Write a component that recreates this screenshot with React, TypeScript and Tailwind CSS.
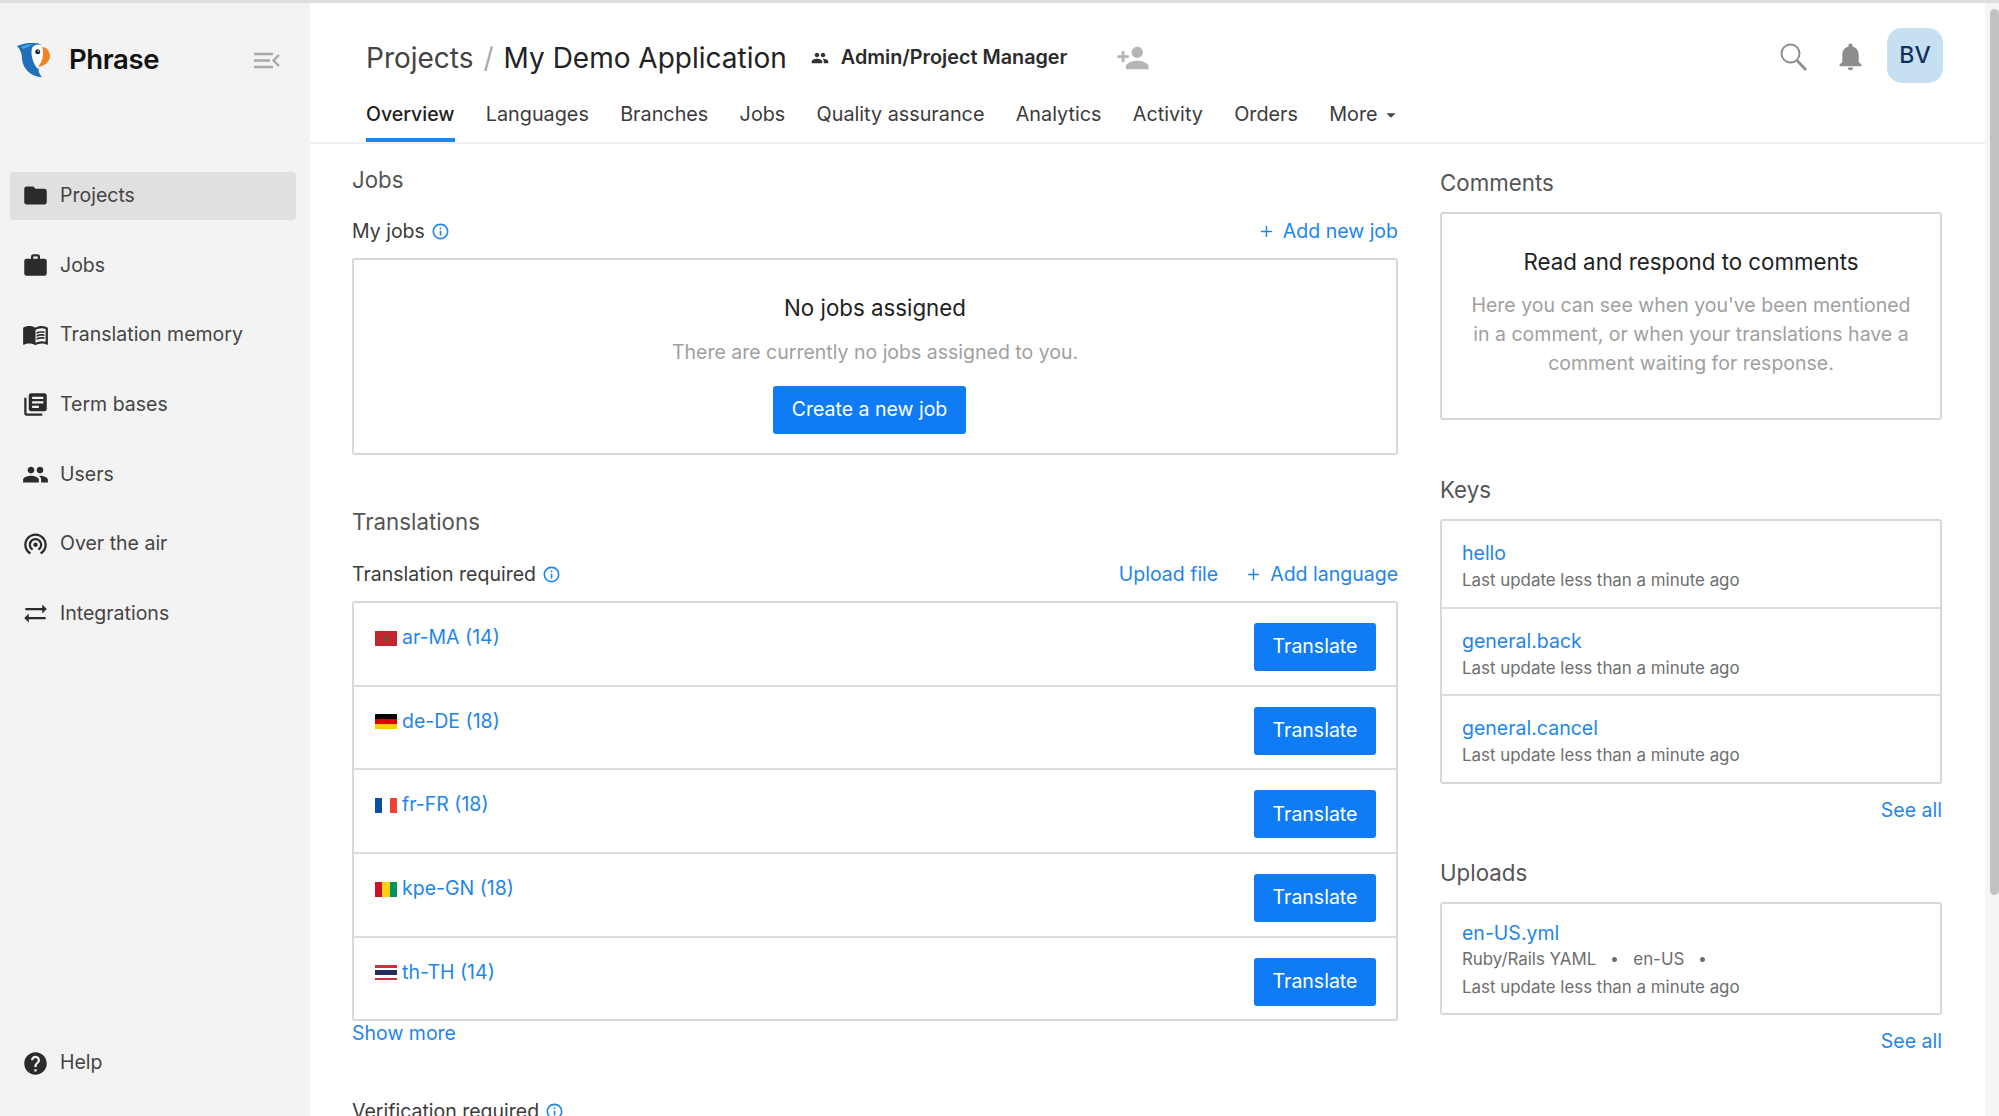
import { Plus } from "lucide-react";
import {
  MdArrowDropDown,
  MdFolder,
  MdHelp,
  MdInfoOutline,
  MdLibraryBooks,
  MdMenuBook,
  MdNotifications,
  MdPeople,
  MdPersonAdd,
  MdSyncAlt,
  MdWifiTethering,
  MdWork,
} from "react-icons/md";

const navItems = [
  { icon: MdFolder, label: "Projects", active: true },
  { icon: MdWork, label: "Jobs" },
  { icon: MdMenuBook, label: "Translation memory" },
  { icon: MdLibraryBooks, label: "Term bases" },
  { icon: MdPeople, label: "Users" },
  { icon: MdWifiTethering, label: "Over the air" },
  { icon: MdSyncAlt, label: "Integrations" },
];

const tabs = ["Overview", "Languages", "Branches", "Jobs", "Quality assurance", "Analytics", "Activity", "Orders"];

const locales = [
  { label: "ar-MA (14)", flag: "ma" },
  { label: "de-DE (18)", flag: "de" },
  { label: "fr-FR (18)", flag: "fr" },
  { label: "kpe-GN (18)", flag: "gn" },
  { label: "th-TH (14)", flag: "th" },
];

const keys = ["hello", "general.back", "general.cancel"];

const Logo = () => (
  <svg width="33" height="34" viewBox="0 0 33 34" className="shrink-0">
    <path d="M0 3 C6 1 12 -1 18 0 C22 0 25 2 26 4 L22 24 C21 28 22 31 25 34 C14 34 6 26 5 16 C5 10 3 6 0 3 Z" fill="#1f70b8" />
    <path d="M4 4 C8 2 12 1 16 1 C13 3 9 5 6 6 Z" fill="#3fa6dc" />
    <path d="M15 5 C17 1 23 0 27 4 L24 22 L21 26 C17 22 13 13 15 5 Z" fill="#fff" />
    <path d="M25 4 C30 4 33 9 33 13 C33 19 27 23 21 24 C24 20 26 16 26 12 C26 9 26 6 25 4 Z" fill="#f58220" />
    <circle cx="20.7" cy="8.7" r="2.5" fill="#1b2a3a" />
    <circle cx="21.4" cy="8" r="0.7" fill="#fff" />
  </svg>
);

const CollapseIcon = () => (
  <svg width="26" height="17" viewBox="0 0 26 17" fill="none" stroke="#a9a9a9" strokeWidth="2.4">
    <path d="M0 2 H19 M0 8.5 H16 M0 15 H19" />
    <path d="M25 3 L19.5 8.5 L25 14" />
  </svg>
);

const SearchIcon = () => (
  <svg width="27" height="28" viewBox="0 0 27 28" fill="none" stroke="#8d8d8d" className="mb-[2px] ml-auto">
    <circle cx="10.5" cy="10.5" r="9" strokeWidth="2" />
    <path d="M17 17.5 L26 27" strokeWidth="2.6" />
  </svg>
);

const Flag = ({ code }: { code: string }) => {
  if (code === "ma") {
    return (
      <svg width="22" height="15" viewBox="0 0 22 15" className="mt-[2px] shrink-0">
        <rect width="22" height="15" fill="#c1272d" />
        <path d="M11 3.5 L12.8 10.5 L7 6.2 H15 L9.2 10.5 Z" fill="#5a5a2a" />
      </svg>
    );
  }
  if (code === "de") {
    return (
      <div className="mt-[2px] flex h-[15px] w-[22px] shrink-0 flex-col">
        <div className="flex-1 bg-black" />
        <div className="flex-1 bg-[#dd0000]" />
        <div className="flex-1 bg-[#ffce00]" />
      </div>
    );
  }
  if (code === "fr") {
    return (
      <div className="mt-[2px] flex h-[15px] w-[22px] shrink-0">
        <div className="flex-1 bg-[#0b4ea2]" />
        <div className="flex-1 bg-white" />
        <div className="flex-1 bg-[#ef4135]" />
      </div>
    );
  }
  if (code === "gn") {
    return (
      <div className="mt-[2px] flex h-[15px] w-[22px] shrink-0">
        <div className="flex-1 bg-[#ce1126]" />
        <div className="flex-1 bg-[#fcd116]" />
        <div className="flex-1 bg-[#009460]" />
      </div>
    );
  }
  return (
    <div className="mt-[2px] flex h-[15px] w-[22px] shrink-0 flex-col">
      <div className="h-[2.5px] bg-[#c8313e]" />
      <div className="h-[2.5px] bg-white" />
      <div className="h-[5px] bg-[#232d5b]" />
      <div className="h-[2.5px] bg-white" />
      <div className="h-[2.5px] bg-[#c8313e]" />
    </div>
  );
};

const SectionTitle = ({ children, className }: { children: string; className: string }) => (
  <h2 className={`text-[22.3px] leading-[30px] text-[#555] ${className}`}>{children}</h2>
);

const InfoLabel = ({ children }: { children: string }) => (
  <div className="flex items-center gap-[6px] text-[19.5px] leading-[28px] text-[#3b3b3b]">
    {children}
    <MdInfoOutline size={19} className="text-[#1e86ea]" />
  </div>
);

const Sidebar = () => (
  <aside className="flex h-full w-[310px] shrink-0 flex-col bg-[#f3f3f3]">
    <div className="flex h-[114px] items-center pr-[30px] pl-[17px]">
      <Logo />
      <span className="ml-[19px] flex-1 text-[27.5px] font-semibold tracking-[-0.4px] text-[#111]">Phrase</span>
      <CollapseIcon />
    </div>
    <nav className="mt-[54.5px] flex flex-col gap-[21.7px] pr-[14px] pl-[10px]">
      {navItems.map((item) => (
        <div
          key={item.label}
          className={`flex h-[48px] items-center gap-[11px] rounded-[4px] px-[12px] text-[19.5px] text-[#444] ${item.active ? "bg-[#e0e0e0]" : ""}`}
        >
          <item.icon size={27} className="shrink-0 text-[#2b2b2b]" />
          {item.label}
        </div>
      ))}
    </nav>
    <div className="mt-auto mb-[29px] flex h-[48px] items-center gap-[11px] px-[22px] text-[19.5px] text-[#444]">
      <MdHelp size={27} className="shrink-0 text-[#2b2b2b]" />
      Help
    </div>
  </aside>
);

const Header = () => (
  <header className="h-[141px] shrink-0 border-b-2 border-[#efefef] pr-[42px] pl-[56px]">
    <div className="flex h-[101px] items-center pt-[9px]">
      <div className="flex items-center text-[28px] text-[#222]">
        <span className="text-[#444]">Projects</span>
        <span className="mx-[10px] text-[#aaa]">/</span>
        <span>My Demo Application</span>
      </div>
      <MdPeople size={18} className="ml-[24px] text-[#333]" />
      <span className="ml-[12px] text-[19.8px] font-semibold text-[#2b2b2b]">Admin/Project Manager</span>
      <MdPersonAdd size={34} className="ml-[49px] text-[#b5b5b5]" />
      <SearchIcon />
      <MdNotifications size={33} className="mb-[3px] ml-[27px] text-[#8d8d8d]" />
      <div className="mb-[5px] ml-[20px] flex h-[55px] w-[56px] items-center justify-center rounded-[15px] bg-[#c6dff1] text-[23px] font-medium text-[#12305f]">
        BV
      </div>
    </div>
    <nav className="flex h-[38px] gap-[31.3px] text-[19.8px] text-[#3b3b3b]">
      {tabs.map((tab, i) => (
        <div
          key={tab}
          className={`h-[38px] leading-[20px] ${i === 0 ? "border-b-[4px] border-[#1e86ea] text-[19.5px] font-medium text-[#222]" : ""}`}
        >
          {tab}
        </div>
      ))}
      <div className="mt-[1px] flex h-[20px] items-center">
        More
        <MdArrowDropDown size={22} className="ml-[2px] text-[#444]" />
      </div>
    </nav>
  </header>
);

const LeftColumn = () => (
  <section className="w-[1046px] shrink-0">
    <SectionTitle className="mt-[21px]">Jobs</SectionTitle>
    <div className="mt-[22px] flex items-center justify-between">
      <InfoLabel>My jobs</InfoLabel>
      <a className="flex items-center gap-[8px] text-[19.5px] leading-[28px] text-[#1e86ea]">
        <Plus size={17} />
        Add new job
      </a>
    </div>
    <div className="mt-[13px] flex h-[197px] flex-col items-center rounded-[3px] border-2 border-[#d8d8d8] pt-[33px]">
      <p className="text-[22.3px] leading-[30px] text-[#222]">No jobs assigned</p>
      <p className="mt-[15px] text-[19.5px] leading-[28px] text-[#a0a0a0]">There are currently no jobs assigned to you.</p>
      <button className="mt-[20px] mr-[11px] h-[48px] w-[193px] rounded-[3px] bg-[#0f7cf5] text-[19.5px] text-white">
        Create a new job
      </button>
    </div>
    <SectionTitle className="mt-[52px]">Translations</SectionTitle>
    <div className="mt-[23px] flex items-center justify-between">
      <InfoLabel>Translation required</InfoLabel>
      <div className="flex items-center gap-[27px] text-[19.5px] leading-[28px] text-[#1e86ea]">
        <a>Upload file</a>
        <a className="flex items-center gap-[8px]">
          <Plus size={17} />
          Add language
        </a>
      </div>
    </div>
    <div className="mt-[13px] rounded-[3px] border-2 border-[#d8d8d8]">
      {locales.map((locale, i) => (
        <div
          key={locale.label}
          className={`flex items-start justify-between pt-[20px] pr-[20px] pl-[21px] ${i > 0 ? "h-[83.7px] border-t-2 border-[#dcdcdc]" : "h-[81.7px]"}`}
        >
          <a className="flex items-center gap-[5px] text-[19.5px] leading-[28px] text-[#1e86ea]">
            <Flag code={locale.flag} />
            {locale.label}
          </a>
          <button className="h-[48px] w-[122px] rounded-[3px] bg-[#0f7cf5] text-[19.5px] text-white">Translate</button>
        </div>
      ))}
    </div>
    <a className="-mt-[2px] block text-[19.5px] leading-[28px] text-[#1e86ea]">Show more</a>
    <div className="mt-[50px]">
      <InfoLabel>Verification required</InfoLabel>
    </div>
  </section>
);

const RightColumn = () => (
  <aside className="w-[502px] shrink-0">
    <SectionTitle className="mt-[24px]">Comments</SectionTitle>
    <div className="mt-[14px] flex h-[208px] flex-col items-center rounded-[3px] border-2 border-[#d8d8d8] px-[24px] pt-[33px] text-center">
      <p className="text-[22.3px] leading-[30px] text-[#222]">Read and respond to comments</p>
      <p className="mt-[14px] text-[19.5px] leading-[29px] text-[#a0a0a0]">
        Here you can see when you've been mentioned in a comment, or when your translations have a comment waiting for
        response.
      </p>
    </div>
    <SectionTitle className="mt-[55px]">Keys</SectionTitle>
    <div className="mt-[14px] rounded-[3px] border-2 border-[#d8d8d8]">
      {keys.map((key, i) => (
        <div
          key={key}
          className={`px-[20px] pt-[18px] ${i > 0 ? "h-[87.7px] border-t-2 border-[#dcdcdc]" : "h-[85.7px]"}`}
        >
          <a className="block text-[19.5px] leading-[28px] text-[#1e86ea]">{key}</a>
          <p className="text-[16.9px] leading-[26px] text-[#6e6e6e]">Last update less than a minute ago</p>
        </div>
      ))}
    </div>
    <a className="mt-[12px] block text-right text-[19.5px] leading-[28px] text-[#1e86ea]">See all</a>
    <SectionTitle className="mt-[34px]">Uploads</SectionTitle>
    <div className="mt-[14px] h-[113px] rounded-[3px] border-2 border-[#d8d8d8] px-[20px] pt-[16px]">
      <a className="block text-[19.5px] leading-[27px] text-[#1e86ea]">en-US.yml</a>
      <div className="flex items-center text-[16.9px] leading-[25px] text-[#6e6e6e]">
        Ruby/Rails YAML
        <span className="mx-[16px] h-[5px] w-[5px] rounded-full bg-[#6e6e6e]" />
        en-US
        <span className="mx-[16px] h-[5px] w-[5px] rounded-full bg-[#6e6e6e]" />
      </div>
      <p className="mt-[2px] text-[16.9px] leading-[26px] text-[#6e6e6e]">Last update less than a minute ago</p>
    </div>
    <a className="mt-[12px] block text-right text-[19.5px] leading-[28px] text-[#1e86ea]">See all</a>
  </aside>
);

const App = () => {
  return (
    <div className="h-[1116px] overflow-hidden border-t-[3px] border-[#dedede] bg-white font-['Inter',sans-serif]">
      <div className="flex h-full">
        <Sidebar />
        <main className="flex min-w-0 flex-1 flex-col overflow-hidden">
          <Header />
          <div className="flex gap-[42px] pl-[42px]">
            <LeftColumn />
            <RightColumn />
          </div>
        </main>
        <div className="flex w-[14px] shrink-0 justify-center bg-[#f5f5f5] pt-[6px]">
          <div className="ml-[4px] h-[886px] w-[9px] rounded-full bg-[#c2c2c2]" />
        </div>
      </div>
    </div>
  );
};

export default App;
